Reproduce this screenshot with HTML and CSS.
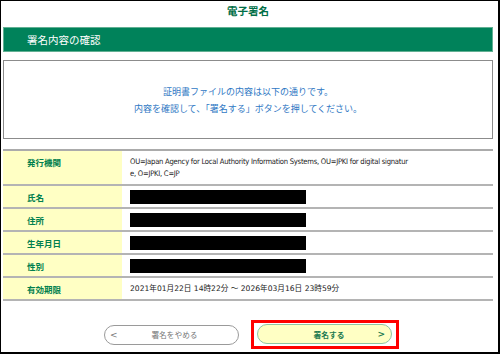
FILE: index.html
```html
<!doctype html>
<html lang="ja">

<head>
    <meta charset="UTF-8">
    <meta name="viewport" content="width=device-width, initial-scale=1.0">
    <title>電子署名</title>
    <link rel="stylesheet" href="styles.css">
</head>

<body>
    <div class="frame">
        <div class="page">
            <h1 class="page--title">電子署名</h1>
            <h2 class="page--heading">署名内容の確認</h2>

            <div class="notice">
                <p>証明書ファイルの内容は以下の通りです。</p>
                <p>内容を確認して、「署名する」ボタンを押してください。</p>
            </div>

            <table class="info">
                <tr>
                    <th>発行機関</th>
                    <td class="info--text info--issuer">OU=Japan Agency for Local Authority Information Systems, OU=JPKI for digital signature, O=JPKI, C=JP</td>
                </tr>
                <tr>
                    <th>氏名</th>
                    <td class="info--hidden"><span class="redact"></span></td>
                </tr>
                <tr>
                    <th>住所</th>
                    <td class="info--hidden"><span class="redact"></span></td>
                </tr>
                <tr>
                    <th>生年月日</th>
                    <td class="info--hidden"><span class="redact"></span></td>
                </tr>
                <tr>
                    <th>性別</th>
                    <td class="info--hidden"><span class="redact"></span></td>
                </tr>
                <tr>
                    <th>有効期限</th>
                    <td class="info--text">2021年01月22日 14時22分 ～ 2026年03月16日 23時59分</td>
                </tr>
            </table>

            <div class="actions">
                <button class="btn btn--cancel">
                    <span class="btn--arrow">&lt;</span>
                    <span class="btn--label">署名をやめる</span>
                    <span></span>
                </button>
                <div class="highlight">
                    <button class="btn btn--sign">
                        <span></span>
                        <span class="btn--label">署名する</span>
                        <span class="btn--arrow">&gt;</span>
                    </button>
                </div>
            </div>
        </div>
    </div>
</body>

</html>
```

FILE: styles.css
```css
body {
    margin: 0;
    font-family: "Noto Sans CJK JP", sans-serif;
}

.frame {
    width: 500px;
    height: 354px;
    box-sizing: border-box;
    border: solid #000000;
    border-width: 1px 2px 2px 1px;
    background-color: #ffffff;
    overflow: hidden;
}

.page {
    width: 490px;
    padding-left: 2px;
}

.page--title {
    margin: 0;
    height: 26px;
    line-height: 20px;
    text-align: center;
    font-size: 10.5px;
    font-weight: bold;
    color: #006e46;
}

.page--heading {
    margin: 0;
    height: 25px;
    box-sizing: border-box;
    border: 1px solid #62b093;
    background-color: #00825a;
    color: #ffffff;
    font-size: 10.5px;
    font-weight: normal;
    line-height: 23px;
    padding-left: 23px;
}

.notice {
    margin-top: 8px;
    height: 79px;
    box-sizing: border-box;
    border: 1px solid #8c8c8c;
    display: flex;
    flex-direction: column;
    justify-content: center;
    align-items: center;
    color: #2f78c4;
    font-size: 9px;
    line-height: 17px;
}

.notice p {
    margin: 0;
}

.info {
    margin-top: 10px;
    width: 490px;
    border-collapse: collapse;
    border-top: 2px solid #ababab;
}

.info tr {
    border-bottom: 2px solid #b4b4b4;
}

.info th,
.info td {
    padding-top: 5px;
    padding-bottom: 4px;
    line-height: 12px;
    vertical-align: top;
}

.info th {
    width: 95px;
    padding-left: 24px;
    padding-right: 0;
    background-color: #ffffc4;
    color: #00804e;
    font-size: 8.5px;
    font-weight: bold;
    text-align: left;
}

.info td {
    padding-left: 8px;
    padding-right: 82px;
}

.info--text {
    font-family: "DejaVu Sans", "Noto Sans CJK JP", sans-serif;
    font-size: 7.6px;
    color: #222222;
}

.info--issuer {
    font-family: "DejaVu Sans Condensed", "DejaVu Sans", sans-serif;
    font-stretch: condensed;
    font-size: 7.6px;
    letter-spacing: -0.25px;
    word-break: break-all;
}

.info td.info--hidden {
    vertical-align: middle;
    padding-top: 0;
    padding-bottom: 0;
    height: 21px;
}

.redact {
    display: block;
    width: 176px;
    height: 14px;
    background-color: #000000;
}

.actions {
    margin-top: 19px;
    display: flex;
    align-items: center;
    padding-left: 101px;
    gap: 12px;
}

.btn {
    display: grid;
    grid-template-columns: 18px 1fr 11px;
    align-items: center;
    height: 20px;
    width: 135px;
    box-sizing: border-box;
    padding: 0 6px 0 8px;
    border-radius: 10px;
    font-family: "Noto Sans CJK JP", sans-serif;
    font-size: 7.7px;
    cursor: pointer;
}

.btn--cancel {
    border: 1px solid #9a9a9a;
    background-color: #ffffff;
    color: #777777;
    padding-left: 5px;
}

.btn--sign {
    border: 1px solid #8fc4a4;
    background-color: #ffffc4;
    color: #1c7a50;
    font-weight: bold;
}

.btn--label {
    text-align: center;
}

.btn--arrow {
    font-family: "DejaVu Sans", sans-serif;
    font-size: 9px;
    text-align: left;
}

.btn--sign .btn--arrow {
    text-align: right;
}

.highlight {
    border: 3px solid #ff0000;
    padding: 1px 4px 2px 3px;
}
```
